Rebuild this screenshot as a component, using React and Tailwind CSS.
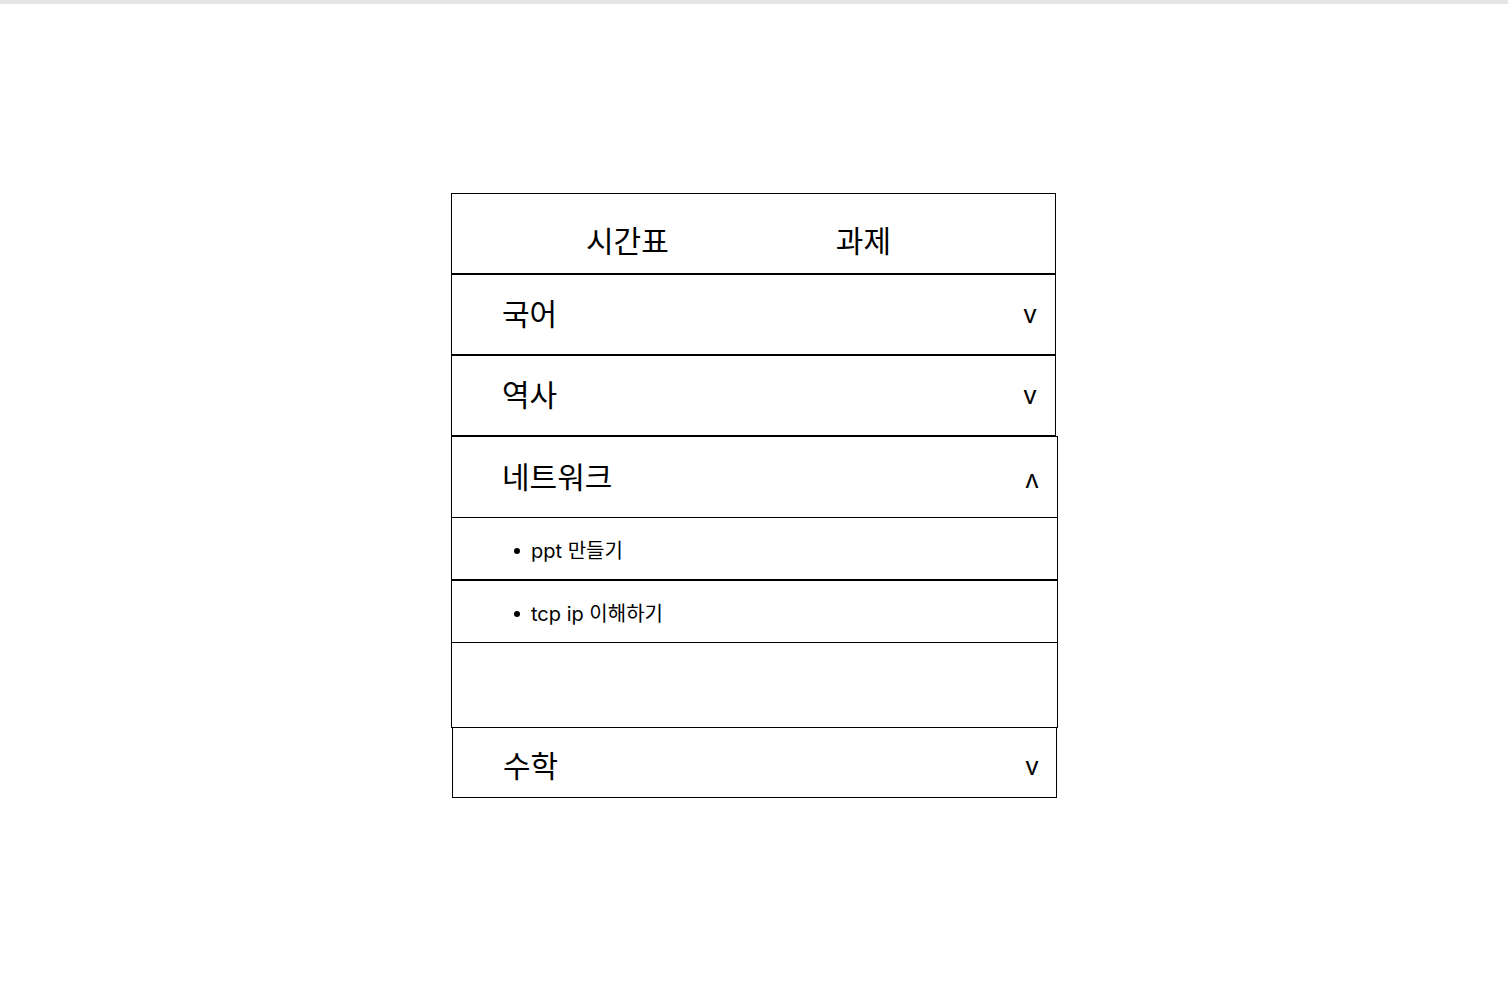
const subjects = ["국어", "역사"]
const tasks = ["ppt 만들기", "tcp ip 이해하기"]

function Arrow({ up }) {
  return <span className={"text-[25px] leading-none " + (up ? "rotate-180 inline-block" : "")}>v</span>
}

export default function App() {
  return (
    <div className="min-h-screen bg-white text-black font-['Inter','Noto_Sans_CJK_KR',sans-serif]">
      <div className="h-1 bg-[#e4e4e4]" />
      <div className="w-[605px] ml-[451px] mt-[189px]">
        <div className="h-[81px] border border-black flex items-center pt-4 pl-[134px] gap-[167px] text-[30px]">
          <span>시간표</span>
          <span>과제</span>
        </div>

        {subjects.map((s) => (
          <div key={s} className="h-[81px] border border-black flex items-center justify-between pl-[50px] pr-[18px]">
            <span className="text-[30px]">{s}</span>
            <Arrow />
          </div>
        ))}

        <div className="w-[607px] h-[81px] border-x border-t border-black flex items-center justify-between pl-[50px] pr-[18px]">
          <span className="text-[30px]">네트워크</span>
          <span className="pt-3">
            <Arrow up />
          </span>
        </div>

        <ul className="w-[607px] text-[20px]">
          {tasks.map((t) => (
            <li key={t} className="h-[63px] border border-black flex items-center pl-[62px] pt-1">
              <span className="w-[6px] h-[6px] rounded-full bg-black mr-[11px]" />
              {t}
            </li>
          ))}
        </ul>

        <div className="w-[607px] h-[85px] border-x border-b border-black" />

        <div className="ml-px w-[605px] h-[70px] border-x border-b border-black flex items-center justify-between pl-[50px] pr-[17px] pt-2">
          <span className="text-[30px]">수학</span>
          <Arrow />
        </div>
      </div>
    </div>
  )
}
